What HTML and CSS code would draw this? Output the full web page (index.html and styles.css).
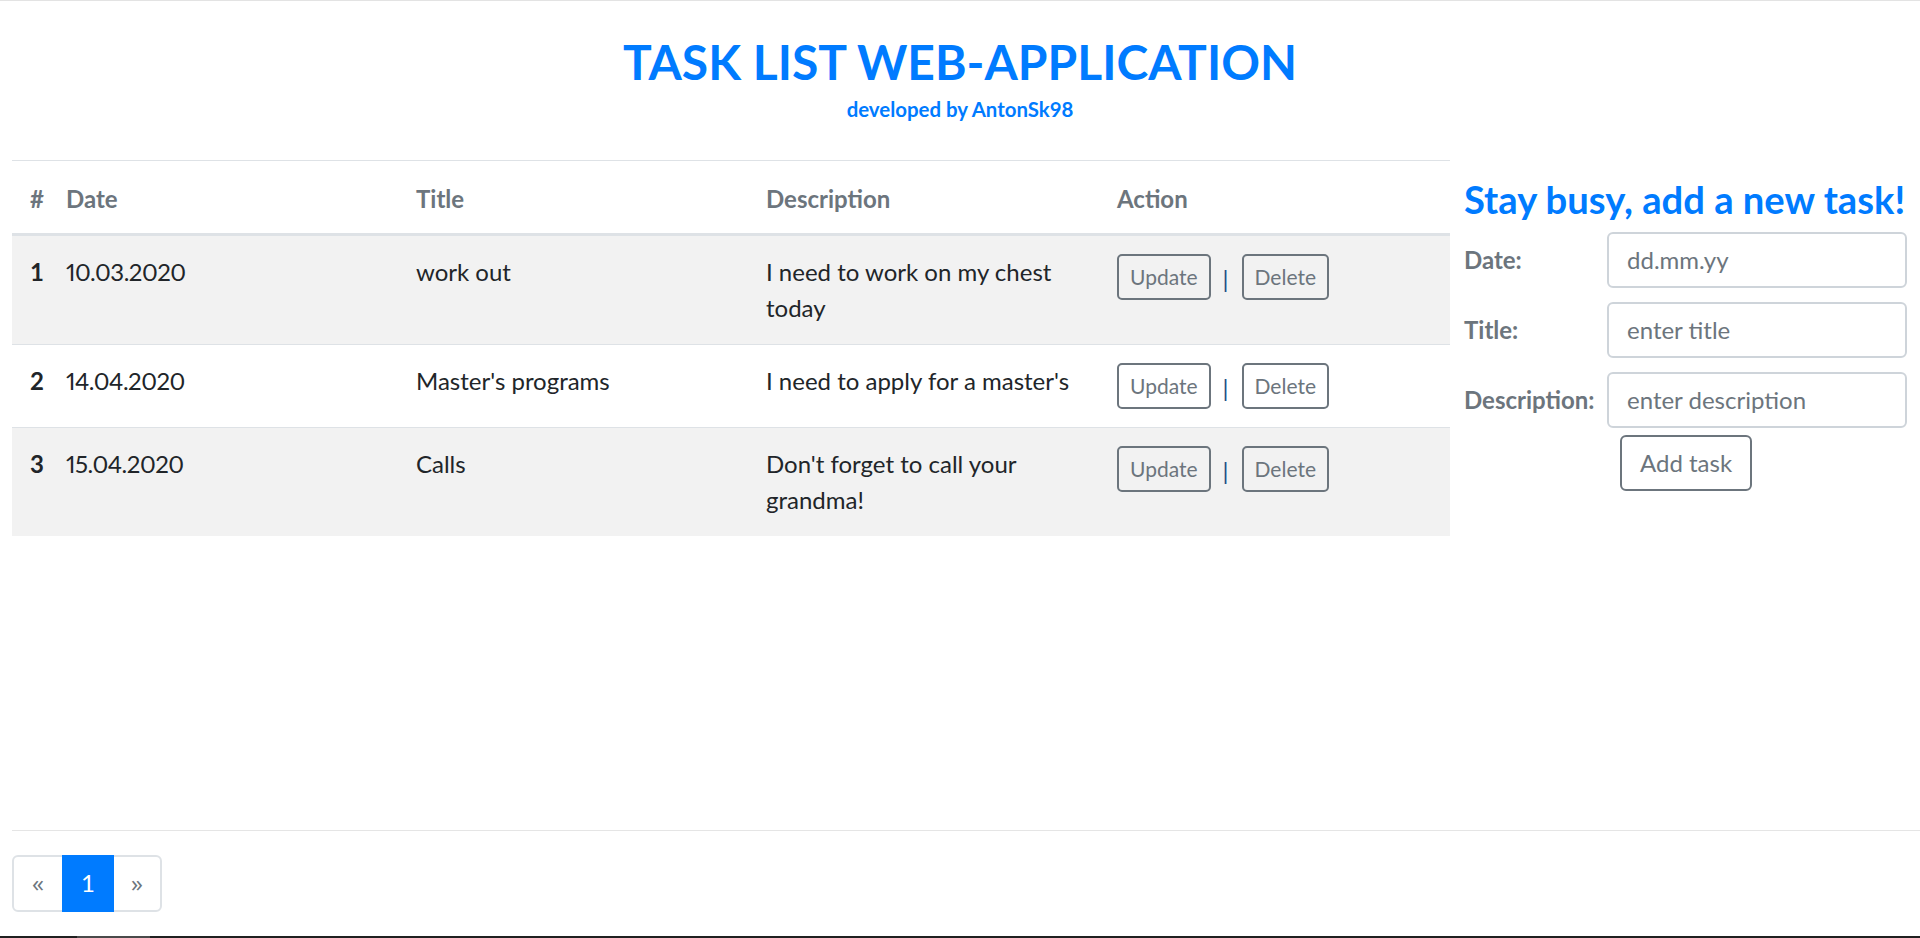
FILE: index.html
```html
<!DOCTYPE html>
<html lang="en">
<head>
<meta charset="utf-8">
<title>Task List Web-Application</title>
<link rel="stylesheet" href="styles.css">
</head>
<body>
<div class="page">
  <header class="hero">
    <h2 class="hero-title">TASK LIST WEB-APPLICATION</h2>
    <p class="hero-sub">developed by AntonSk98</p>
  </header>

  <div class="main">
    <section class="tasks">
      <table class="task-table">
        <colgroup>
          <col class="c-num"><col class="c-date"><col class="c-title"><col class="c-desc"><col class="c-action">
        </colgroup>
        <thead>
          <tr>
            <th class="num">#</th>
            <th>Date</th>
            <th>Title</th>
            <th>Description</th>
            <th>Action</th>
          </tr>
        </thead>
        <tbody>
          <tr class="striped">
            <th class="num">1</th>
            <td class="date">10.03.2020</td>
            <td>work out</td>
            <td>I need to work on my chest today</td>
            <td><div class="actions"><button class="btn-sm">Update</button><span class="sep">|</span><button class="btn-sm">Delete</button></div></td>
          </tr>
          <tr>
            <th class="num">2</th>
            <td class="date">14.04.2020</td>
            <td>Master's programs</td>
            <td class="nowrap">I need to apply for a master's</td>
            <td><div class="actions"><button class="btn-sm">Update</button><span class="sep">|</span><button class="btn-sm">Delete</button></div></td>
          </tr>
          <tr class="striped">
            <th class="num">3</th>
            <td class="date">15.04.2020</td>
            <td>Calls</td>
            <td>Don't forget to call your grandma!</td>
            <td><div class="actions"><button class="btn-sm">Update</button><span class="sep">|</span><button class="btn-sm">Delete</button></div></td>
          </tr>
        </tbody>
      </table>
    </section>

    <aside class="add">
      <h4 class="add-title">Stay busy, add a new task!</h4>
      <form class="add-form">
        <label class="add-label" for="f-date">Date:</label>
        <input class="add-input" id="f-date" type="text" placeholder="dd.mm.yy">
        <label class="add-label" for="f-title">Title:</label>
        <input class="add-input" id="f-title" type="text" placeholder="enter title">
        <label class="add-label" for="f-desc">Description:</label>
        <input class="add-input" id="f-desc" type="text" placeholder="enter description">
        <button class="btn-add" type="button">Add task</button>
      </form>
    </aside>
  </div>

  <footer class="footer">
    <div class="rule"></div>
    <nav class="pagination">
      <span class="page-item disabled">&laquo;</span>
      <span class="page-item active">1</span>
      <span class="page-item disabled">&raquo;</span>
    </nav>
  </footer>

  <div class="scrollbar"><div class="scrollbar-thumb"></div></div>
</div>
</body>
</html>
```

FILE: styles.css
```css
* { box-sizing: border-box; }

html, body {
  margin: 0;
  padding: 0;
  background: #ffffff;
}

body {
  font-family: Lato, "Open Sans", "Liberation Sans", sans-serif;
  font-size: 24px;
  line-height: 1.5;
  color: #212529;
}

.page {
  border-top: 1px solid #e3e3e3;
  min-height: 938px;
}

/* header */
.hero {
  text-align: center;
  padding: 32px 0 39px;
}

.hero-title {
  margin: 0;
  font-size: 48px;
  line-height: 57.6px;
  font-weight: 700;
  color: #007bff;
}

.hero-sub {
  margin: 7px 0 0;
  font-size: 20.4px;
  line-height: 23px;
  font-weight: 700;
  color: #007bff;
}

/* main */
.main {
  display: flex;
  padding-left: 12px;
  min-height: 670px;
}

.tasks {
  width: 1438px;
  flex: none;
}

.task-table {
  width: 1438px;
  border-collapse: collapse;
  table-layout: fixed;
}

.c-num { width: 42px; }
.c-date { width: 350px; }
.c-title { width: 350px; }
.c-desc { width: 351px; }
.c-action { width: 345px; }

.task-table th,
.task-table td {
  padding: 18px 12px;
  text-align: left;
  vertical-align: top;
  border-top: 1px solid #dee2e6;
  line-height: 36px;
}

.task-table thead th {
  padding-top: 20px;
  padding-bottom: 16px;
  color: #6c757d;
  font-weight: 700;
  border-bottom: 3px solid #dee2e6;
}

.task-table .num {
  padding-left: 18px;
  padding-right: 10px;
  font-weight: 700;
}

.task-table tbody .num { color: #212529; }

.task-table tr.striped { background: #f2f2f2; }

.date {
  font-variant-numeric: proportional-nums;
  letter-spacing: -0.5px;
}

.nowrap { white-space: nowrap; }

.actions {
  display: flex;
  align-items: center;
}

.btn-sm {
  font-family: inherit;
  font-size: 21px;
  line-height: 30px;
  padding: 6px 11px;
  border: 2px solid #6c757d;
  border-radius: 5px;
  background: transparent;
  color: #6c757d;
}

.sep {
  color: #1f4f86;
  margin: 4px 13px 0 12px;
  font-size: 24px;
  line-height: 36px;
}

/* add form */
.add {
  flex: 1;
  padding: 17px 0 0 14px;
}

.add-title {
  margin: 0 0 10px;
  font-size: 38.2px;
  line-height: 45px;
  font-weight: 700;
  color: #007bff;
  white-space: nowrap;
}

.add-form {
  display: grid;
  grid-template-columns: 143px 300px;
  row-gap: 14px;
  align-items: center;
}

.add-label {
  font-weight: 700;
  color: #6c757d;
  line-height: 36px;
}

.add-input {
  width: 300px;
  height: 56px;
  padding: 0 18px;
  border: 2px solid #ced4da;
  border-radius: 6px;
  font-family: inherit;
  font-size: 24px;
  color: #495057;
  background: #fff;
}

.add-input::placeholder { color: #6c757d; }

.btn-add {
  grid-column: 2;
  justify-self: start;
  margin: -7px 0 0 13px;
  height: 56px;
  padding: 0 18px;
  border: 2px solid #6c757d;
  border-radius: 6px;
  background: #fff;
  color: #6c757d;
  font-family: inherit;
  font-size: 24px;
}

/* footer */
.footer {
  padding-left: 12px;
}

.rule {
  border-top: 1px solid #e5e5e5;
}

.pagination {
  display: inline-flex;
  margin-top: 24px;
  border: 2px solid #dee2e6;
  border-radius: 6px;
  height: 57px;
}

.page-item {
  display: flex;
  align-items: center;
  justify-content: center;
  font-size: 24px;
  line-height: 30px;
  color: #6c757d;
}

.page-item.disabled {
  font-family: "Open Sans", Lato, sans-serif;
}

.page-item:first-child { width: 48px; }
.page-item:last-child { width: 46px; }

.page-item.active {
  width: 52px;
  margin: -2px 0;
  background: #007bff;
  color: #ffffff;
}

/* window scrollbar strip at the bottom edge */
.scrollbar {
  position: fixed;
  left: 0;
  right: 0;
  bottom: 0;
  height: 2px;
  background: #202020;
}

.scrollbar-thumb {
  margin-left: 77px;
  width: 73px;
  height: 2px;
  background: #4a4a4a;
}
```
